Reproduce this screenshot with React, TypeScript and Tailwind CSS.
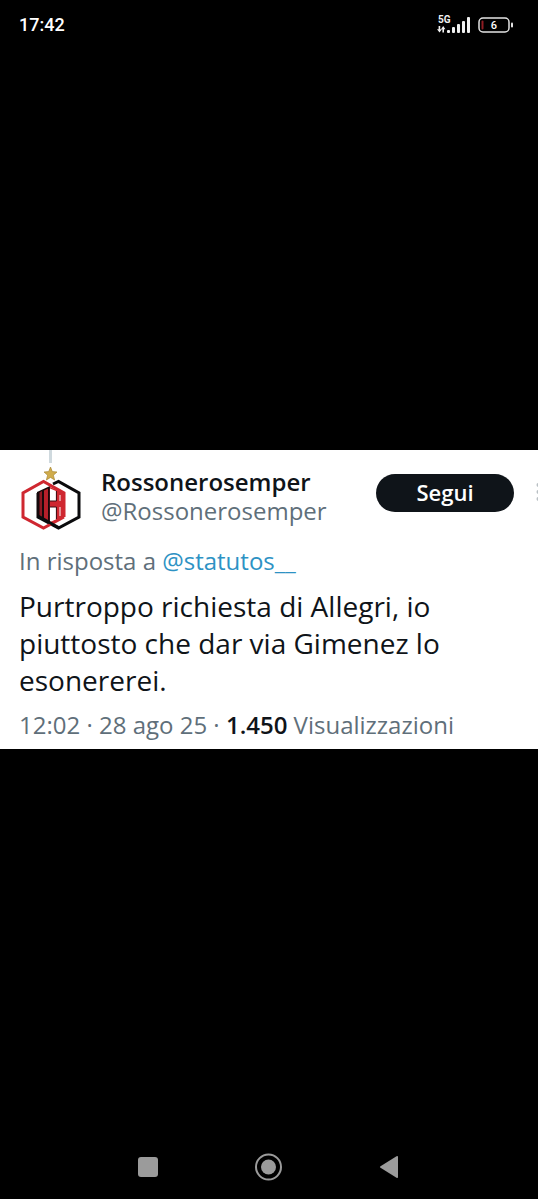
import React from 'react';

const StatusBar = () => (
  <header className="h-16 shrink-0 flex items-start justify-between pl-[19px] pr-[25px] pt-[13px] text-white">
    <time className="font-['Roboto',sans-serif] text-lg leading-6 font-medium">17:42</time>
    <div className="flex items-center gap-2 h-6">
      <svg width="33" height="20" viewBox="0 0 33 20" fill="#f1f1f1" role="img" aria-label="5G">
        <text x="1" y="8" fontSize="10" fontWeight="700" fontFamily="Roboto, sans-serif">5G</text>
        <path d="M2.5 11 L5 14.3 H3.4 V17.5 H1.8 V14.3 H0 Z" transform="rotate(180 2.5 14.3)" />
        <path d="M6.2 11 L8.4 14.3 H7 V17.5 H5.4 V14.3 H4 Z" />
        <rect x="10" y="15" width="3" height="3" rx="1" />
        <rect x="15" y="12" width="3" height="6" rx="1" />
        <rect x="20" y="9" width="3" height="9" rx="1" />
        <rect x="25" y="6" width="3" height="12" rx="1" />
        <rect x="30" y="2" width="3" height="16" rx="1" />
      </svg>
      <svg width="35" height="16" viewBox="0 0 35 16" role="img" aria-label="6%">
        <rect x="1" y="1" width="30" height="14" rx="4" fill="none" stroke="#e4e4e4" strokeWidth="1.5" />
        <rect x="3.5" y="3.5" width="2" height="9" rx="1" fill="#8e1c22" />
        <rect x="33" y="5.5" width="2" height="5" rx="1" fill="#e4e4e4" />
        <text x="16" y="12" fontSize="11" fontWeight="500" textAnchor="middle" fill="#fff" fontFamily="Roboto, sans-serif">6</text>
      </svg>
    </div>
  </header>
);

// Thread line, gold star and the two interlocked hexagons
const Avatar = () => (
  <svg className="shrink-0" width="62" height="80" viewBox="0 0 62 80" role="img" aria-label="Rossonerosemper">
    <rect x="30" y="0" width="3" height="13" fill="#cfd9de" />
    <path d="M31.5 17 L33.3 21.6 L38 22 L34.4 25.2 L35.6 30 L31.5 27.4 L27.4 30 L28.6 25.2 L25 22 L29.7 21.6 Z" fill="#d0ac4c" stroke="#a98837" strokeWidth="0.7" />
    <path d="M34 34 L39.5 31.5 L60 43 V67 L39.5 78 L19 67 V43" fill="none" stroke="#0b0b0d" strokeWidth="3" />
    <path d="M18 42 L31 36 V74 L18 67 Z" fill="#16090b" />
    <path d="M20.5 42.5 L23 41 V69 L20.5 67.5 Z" fill="#8f1822" />
    <path d="M25 40.5 L29 38.5 V71 L25 69.5 Z" fill="#b81f2a" />
    <path d="M31 37 L45 43 V67 L31 73 Z" fill="#cf2730" />
    <path d="M31 38.5 L37 41 V51 H31 Z M31 57 H37 V69.5 L31 72 Z" fill="#fff" />
    <path d="M30.5 37 V73 M37.4 41 V51 H31 M31 57 H37.4 V69" fill="none" stroke="#3a0c12" strokeWidth="1" />
    <path d="M41 45 V51 M41 57 V66" stroke="#f5d9db" strokeWidth="1.2" />
    <path d="M45 67 V43 L24.5 31.5 L4 43 V67 L24.5 78 L45 67" fill="none" stroke="#cf2730" strokeWidth="3" />
    <path d="M19 66 L39.5 77.5" stroke="#0b0b0d" strokeWidth="3" />
  </svg>
);

const Post = () => (
  <article className="bg-white text-[#0f1419] pl-[19px] pb-[9px] font-['Open_Sans',sans-serif] overflow-hidden">
    <div className="flex items-start">
      <Avatar />
      <div className="flex-1 min-w-0 pt-4 pl-5">
        <h1 className="text-2xl leading-8 font-semibold">Rossonerosemper</h1>
        <p className="text-2xl leading-[26px] text-[#5f6f7a]">@Rossonerosemper</p>
      </div>
      <button type="button" className="mt-6 h-[38px] w-[138px] shrink-0 rounded-full bg-[#0f1419] text-white text-[22px] leading-9 pb-1 font-semibold">
        Segui
      </button>
      <button type="button" aria-label="Altro" className="ml-5 mt-8 w-1 shrink-0 overflow-hidden">
        <svg width="5" height="22" viewBox="0 0 5 22" fill="#b9c0c4">
          <circle cx="4.5" cy="3" r="2" />
          <circle cx="4.5" cy="10" r="2" />
          <circle cx="4.5" cy="17" r="2" />
        </svg>
      </button>
    </div>

    <p className="mt-4 text-2xl leading-[30px] text-[#5f6f7a]">
      In risposta a <a href="#statutos" className="text-[#2d92c4]">@statutos__</a>
    </p>
    <p className="mt-3 pr-5 text-[28px] leading-[37px]">
      Purtroppo richiesta di Allegri, io piuttosto che dar via Gimenez lo esonererei.
    </p>
    <p className="mt-[11px] text-2xl leading-[30px] text-[#5f6f7a]">
      12:02 · 28 ago 25 · <strong className="font-semibold text-[#0f1419]">1.450</strong> Visualizzazioni
    </p>
  </article>
);

const NavBar = () => (
  <nav className="h-16 shrink-0 flex items-center justify-center gap-[92px] text-[#9b9b9b]">
    <button type="button" aria-label="Recenti">
      <svg width="28" height="28" viewBox="0 0 28 28" fill="currentColor">
        <rect x="3" y="4" width="20" height="20" rx="3" />
      </svg>
    </button>
    <button type="button" aria-label="Home">
      <svg width="28" height="28" viewBox="0 0 28 28" fill="currentColor">
        <circle cx="13.5" cy="14" r="12.5" fill="none" stroke="currentColor" strokeWidth="2" />
        <circle cx="13.5" cy="14" r="7.5" />
      </svg>
    </button>
    <button type="button" aria-label="Indietro">
      <svg width="28" height="28" viewBox="0 0 28 28" fill="currentColor">
        <path d="M5.5 13.2 L21.5 3.2 Q23 2.5 23 4 V24 Q23 25.5 21.5 24.8 L5.5 14.8 Q4.3 14 5.5 13.2 Z" />
      </svg>
    </button>
  </nav>
);

export default function App() {
  return (
    <div className="min-h-screen bg-black flex flex-col">
      <StatusBar />
      <main className="flex-1 flex flex-col justify-center">
        <Post />
      </main>
      <NavBar />
    </div>
  );
}
